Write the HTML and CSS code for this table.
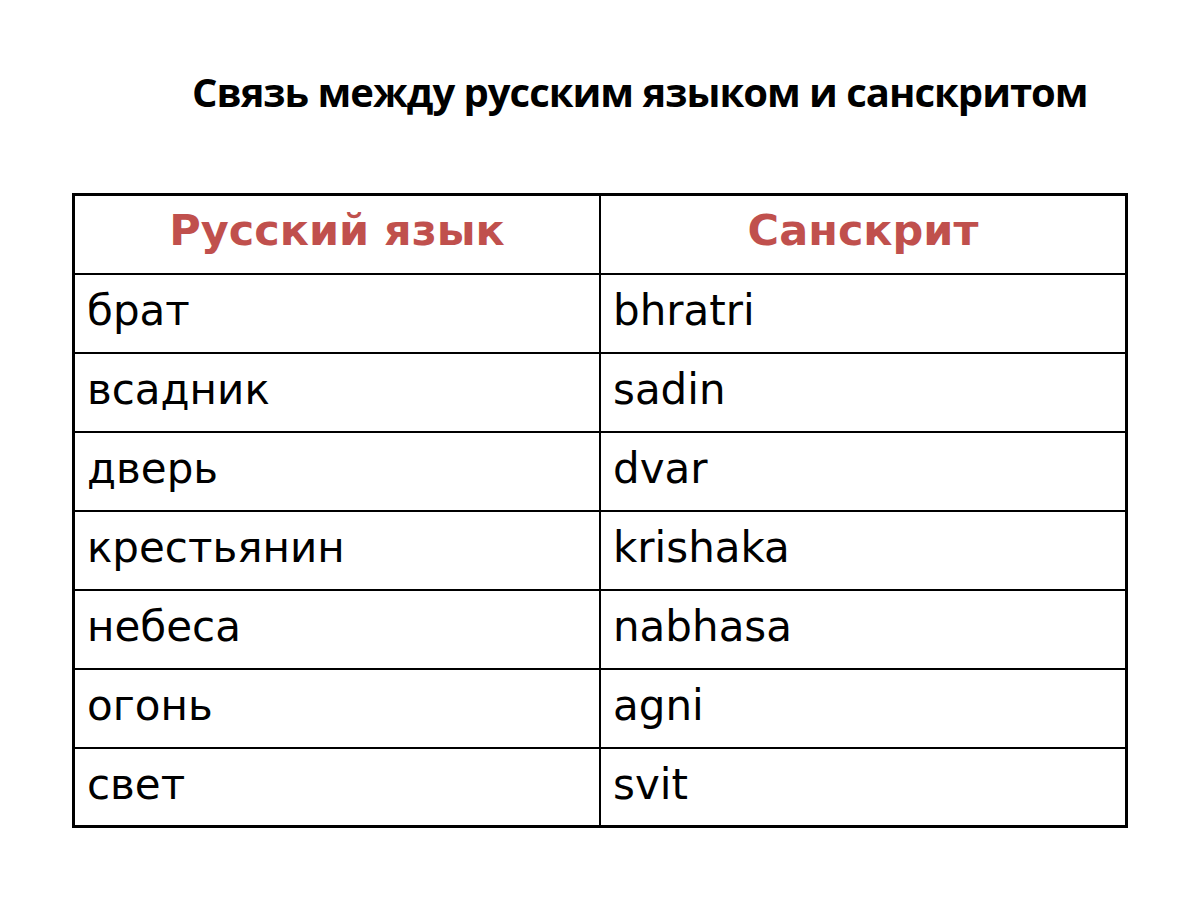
FILE: index.html
```html
<!DOCTYPE html>
<html lang="ru">
<head>
<meta charset="utf-8">
<title>Связь между русским языком и санскритом</title>
<link rel="stylesheet" href="styles.css">
</head>
<body>
<div class="slide">
  <h1 class="title">Связь между русским языком и санскритом</h1>
  <table class="words">
    <thead>
      <tr><th>Русский язык</th><th>Санскрит</th></tr>
    </thead>
    <tbody>
      <tr><td>брат</td><td>bhratri</td></tr>
      <tr><td>всадник</td><td>sadin</td></tr>
      <tr><td>дверь</td><td>dvar</td></tr>
      <tr><td>крестьянин</td><td>krishaka</td></tr>
      <tr><td>небеса</td><td>nabhasa</td></tr>
      <tr><td>огонь</td><td>agni</td></tr>
      <tr><td>свет</td><td>svit</td></tr>
    </tbody>
  </table>
</div>
</body>
</html>
```

FILE: styles.css
```css
html, body {
  margin: 0;
  padding: 0;
  background: #ffffff;
}

.slide {
  width: 1200px;
  height: 900px;
  padding-top: 62px;
  box-sizing: border-box;
}

.title {
  margin: 0 0 0 192px;
  font-family: "Open Sans", "DejaVu Sans", sans-serif;
  font-weight: 700;
  font-size: 40px;
  letter-spacing: -1px;
  line-height: 60px;
  color: #000000;
  white-space: nowrap;
}

.words {
  margin: 71px 0 0 72px;
  width: 1056px;
  border-collapse: collapse;
  border: 3px solid #000000;
  table-layout: fixed;
  font-family: "DejaVu Sans", Verdana, sans-serif;
}

.words th,
.words td {
  border: 2px solid #000000;
  width: 50%;
  box-sizing: border-box;
}

.words th {
  height: 79px;
  font-size: 43px;
  font-weight: 700;
  color: #c0504d;
  text-align: center;
  vertical-align: top;
  padding: 9px 10px 0;
}

.words td {
  height: 79px;
  font-size: 42px;
  font-weight: 400;
  color: #000000;
  text-align: left;
  vertical-align: top;
  padding: 11px 12px 0;
}
```
